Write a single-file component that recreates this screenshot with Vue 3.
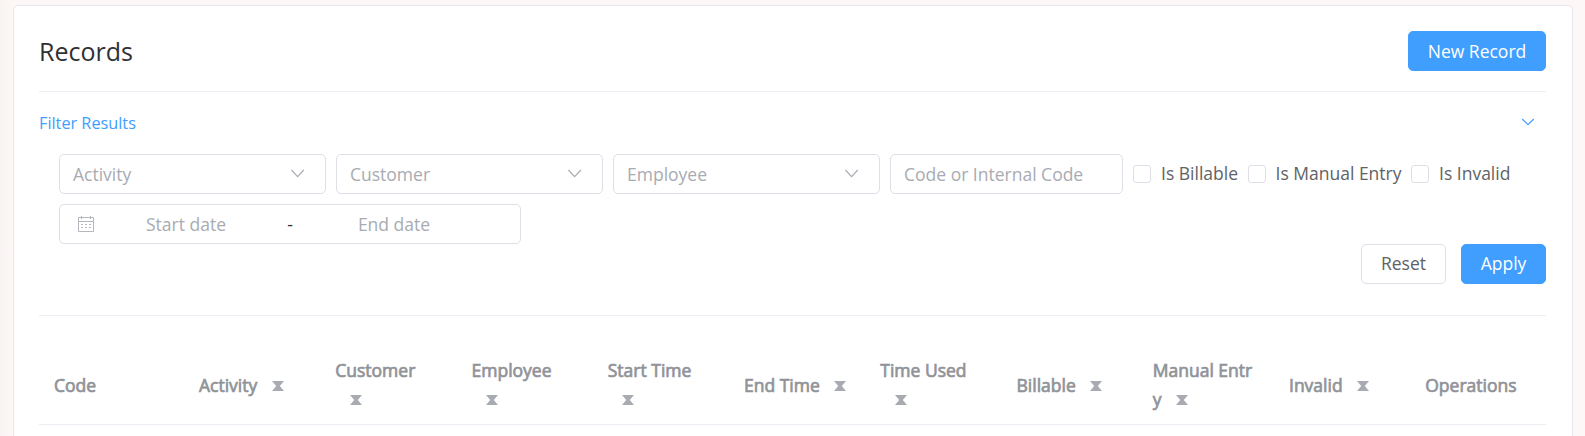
<script setup>
const selects = ['Activity', 'Customer', 'Employee']
const checks = [
  { label: 'Is Billable', cls: 'c1' },
  { label: 'Is Manual Entry', cls: 'c2' },
  { label: 'Is Invalid', cls: 'c3' },
]
const columns = [
  { label: 'Code' },
  { label: 'Activity', sort: true },
  { label: 'Customer', sort: true },
  { label: 'Employee', sort: true },
  { label: 'Start Time', sort: true },
  { label: 'End Time', sort: true },
  { label: 'Time Used', sort: true },
  { label: 'Billable', sort: true },
  { label: 'Manual Entry', sort: true },
  { label: 'Invalid', sort: true },
  { label: 'Operations' },
]
</script>

<template>
  <main class="page">
    <section class="card">
      <header class="head">
        <h1>Records</h1>
        <button class="btn primary new">New Record</button>
      </header>

      <div class="collapse">
        <span>Filter Results</span>
        <svg width="14" height="8" viewBox="0 0 14 8"><path d="M1.2 1 7 6.6 12.8 1" /></svg>
      </div>

      <div class="filters">
        <div v-for="s in selects" :key="s" class="field select">
          <span>{{ s }}</span>
          <svg width="14" height="9" viewBox="0 0 14 9"><path d="M.4 1 6.6 7.6 12.8 1" /></svg>
        </div>
        <div class="field code">Code or Internal Code</div>
        <label v-for="c in checks" :key="c.label" class="check" :class="c.cls">
          <i></i><span>{{ c.label }}</span>
        </label>
        <div class="field range">
          <svg class="cal" width="16" height="16" viewBox="0 0 16 16">
            <path d="M.5 1.5h15v14H.5zM.5 5.5h15" />
            <path d="M3.5 0v3M12.5 0v3" />
            <path class="dots" d="M3 8.5h10M3 11.5h10" />
          </svg>
          <span class="date">Start date</span>
          <span class="dash">-</span>
          <span class="date">End date</span>
        </div>
      </div>

      <div class="actions">
        <button class="btn">Reset</button>
        <button class="btn primary">Apply</button>
      </div>

      <div class="thead">
        <div v-for="c in columns" :key="c.label" class="th">
          {{ c.label }}<span v-if="c.sort" class="sort"><svg width="12" height="10" viewBox="0 0 12 10"><path d="M0 0h12L7.8 5l4.2 5H0l4.2-5z" /></svg></span>
        </div>
      </div>
    </section>
  </main>
</template>

<style>
body { margin: 0; overflow: hidden; }
</style>

<style scoped>
* { box-sizing: border-box; }
.page {
  height: 436px;
  overflow: hidden;
  padding: 5px 12px 0 13px;
  background: linear-gradient(90deg, #f8f4f2 0, #fdf8f7 14px);
  font: 17.5px/28px "Open Sans", sans-serif;
  color: #606266;
}
.card {
  height: 460px;
  padding: 0 26px 0 25px;
  border: 1px solid #e4e7ed;
  border-radius: 5px;
  background: #fff;
}
.head {
  height: 86px;
  padding-top: 25px;
  display: flex;
  justify-content: space-between;
  border-bottom: 1px solid #ebeef5;
}
h1 {
  margin: 0;
  font-size: 25px;
  line-height: 41px;
  font-weight: 400;
  color: #303133;
}
.btn {
  width: 85px;
  height: 40px;
  padding: 0;
  border: 1px solid #dcdfe6;
  border-radius: 5px;
  background: #fff;
  color: #606266;
  font: inherit;
  line-height: 38px;
}
.btn.primary { background: #409eff; border-color: #409eff; color: #fff; }
.btn.new { width: 138px; }
.collapse {
  height: 62px;
  padding-right: 11px;
  display: flex;
  align-items: center;
  justify-content: space-between;
  color: #409eff;
  font-size: 16.25px;
}
svg { display: block; fill: none; stroke: currentColor; stroke-width: 1.2; }
.collapse svg { margin-top: -2px; }
.filters {
  padding-left: 20px;
  display: flex;
  flex-wrap: wrap;
  row-gap: 10px;
}
.field {
  height: 40px;
  display: flex;
  align-items: center;
  border: 1px solid #dcdfe6;
  border-radius: 5px;
  color: #a8abb2;
  padding: 0 20px 0 13px;
  margin-right: 10px;
}
.select { width: 267px; justify-content: space-between; }
.select svg { margin-top: -2px; }
.code { width: 233px; }
.check { height: 38px; display: flex; align-items: center; }
.check i {
  width: 18px;
  height: 18px;
  border: 1px solid #dcdfe6;
  border-radius: 3px;
  margin: 1px 10px 0 0;
}
.c1 { width: 114.5px; }
.c2 { width: 163.5px; }
.range { width: 462px; padding: 0 13px 0 18px; }
.cal { color: #b4b7bd; stroke-width: 1; }
.dots { stroke-dasharray: 2 2; }
.date { width: 184px; text-align: center; }
.dash { width: 24px; text-align: center; color: #303133; }
.actions {
  height: 72px;
  display: flex;
  justify-content: flex-end;
  gap: 15px;
  border-bottom: 1px solid #ebeef5;
}
.actions .btn { padding-bottom: 2px; line-height: 36px; }
.thead {
  margin-top: 31px;
  height: 78px;
  display: grid;
  grid-template-columns: 145px repeat(10, 136.25px);
  align-items: center;
  border-bottom: 1px solid #ebeef5;
  line-height: 28.75px;
  color: #909399;
  -webkit-text-stroke: .7px #909399;
}
.th { padding: 0 14px 1px 15px; word-break: break-all; }
.sort {
  display: inline-flex;
  width: 30px;
  height: 14px;
  justify-content: center;
  align-items: center;
  vertical-align: middle;
  margin: -1px -6px 1px 5.5px;
}
.sort svg { fill: #a8abb2; stroke: none; }
</style>
